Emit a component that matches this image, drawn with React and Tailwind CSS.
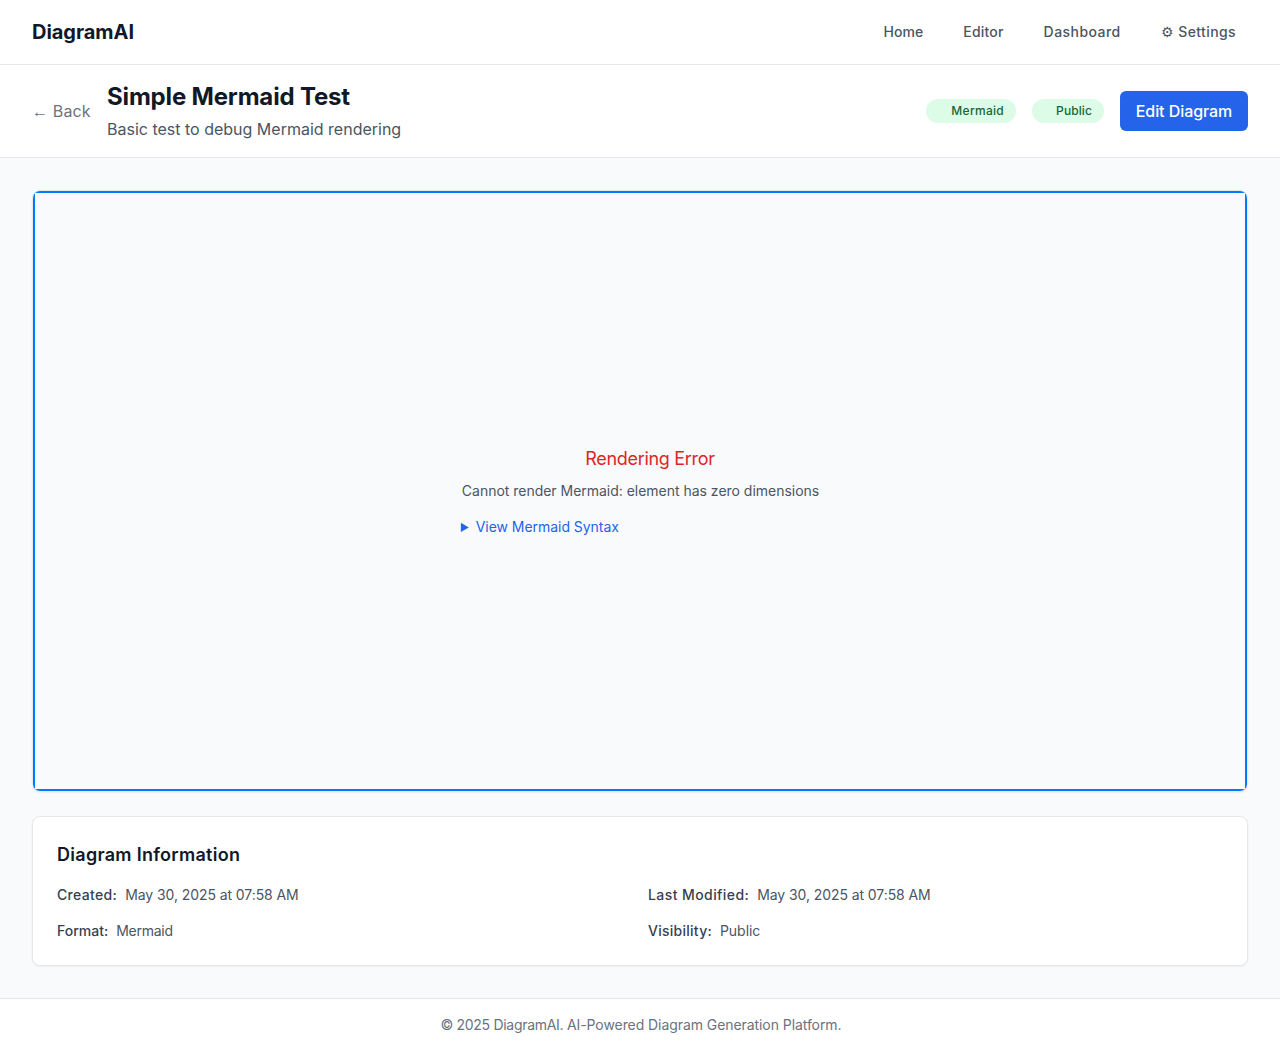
import React from "react";

const navLinks = [
  { label: "Home", tracking: "tracking-[0.05px]" },
  { label: "Editor", tracking: "tracking-[0.2px]" },
  { label: "Dashboard", tracking: "tracking-[0.45px]" },
  { label: "⚙ Settings", tracking: "tracking-[0.4px]" },
];

const details = [
  { label: "Created:", value: "May 30, 2025 at 07:58 AM", labelTracking: "tracking-[0.34px]", valueTracking: "tracking-[-0.08px]" },
  { label: "Last Modified:", value: "May 30, 2025 at 07:58 AM", labelTracking: "tracking-[0.42px]", valueTracking: "tracking-[-0.08px]" },
  { label: "Format:", value: "Mermaid", labelTracking: "tracking-normal", valueTracking: "tracking-[-0.26px]" },
  { label: "Visibility:", value: "Public", labelTracking: "tracking-[0.26px]", valueTracking: "tracking-[-0.04px]" },
];

function Badge({ width, tracking, children }) {
  return (
    <span
      className={`inline-flex items-center justify-end rounded-full bg-[#dcfce7] px-3 py-1 text-xs font-medium text-[#166534] ${width} ${tracking}`}
    >
      {children}
    </span>
  );
}

export default function App() {
  return (
    <div className="flex min-h-screen flex-col bg-[#f9fafb] font-[Inter,sans-serif] text-[#111827]">
      <header className="flex h-[65px] items-center justify-between border-b border-[#e5e7eb] bg-white px-8">
        <div className="text-xl font-bold tracking-[-0.04px]">DiagramAI</div>
        <nav className="flex gap-4">
          {navLinks.map(({ label, tracking }) => (
            <a key={label} className={`px-3 py-2 text-sm font-medium text-[#4b5563] ${tracking}`}>
              {label}
            </a>
          ))}
        </nav>
      </header>

      <section className="flex h-[93px] items-center justify-between border-b border-[#e5e7eb] bg-white px-8">
        <div className="flex items-center gap-4">
          <a className="w-[59px] whitespace-nowrap tracking-[0.15px] text-[#6b7280]">
            <span className="font-['Liberation_Sans']">←</span> Back
          </a>
          <div>
            <h1 className="text-2xl font-bold tracking-[-0.17px]">Simple Mermaid Test</h1>
            <p className="mt-1 text-[#4b5563]">Basic test to debug Mermaid rendering</p>
          </div>
        </div>
        <div className="flex items-center gap-4">
          <Badge width="w-[90px]" tracking="tracking-[0.28px]">Mermaid</Badge>
          <Badge width="w-[72px]" tracking="tracking-[0.1px]">Public</Badge>
          <button className="h-10 w-32 whitespace-nowrap rounded-md bg-[#2563eb] font-medium tracking-[-0.06px] text-white">
            Edit Diagram
          </button>
        </div>
      </section>

      <main className="flex flex-1 flex-col gap-6 p-8">
        <div className="h-[602px] overflow-hidden rounded-lg border border-[#e5e7eb] bg-white shadow-[0_1px_2px_0_rgba(0,0,0,0.05)]">
          <div className="flex h-full items-center justify-center border-2 border-[#007bff] bg-[#f9fafb]">
            <div className="text-center">
              <div className="mb-2 pl-5 text-lg tracking-[-0.31px] text-[#dc2626]">Rendering Error</div>
              <div className="pl-px text-sm tracking-[-0.02px] text-[#4b5563]">
                Cannot render Mermaid: element has zero dimensions
              </div>
              <details className="mt-4 text-left">
                <summary className="cursor-pointer text-sm tracking-[-0.04px] text-[#2563eb]">View Mermaid Syntax</summary>
              </details>
            </div>
          </div>
        </div>

        <div className="h-[150px] rounded-lg border border-[#e5e7eb] bg-white p-6 shadow-[0_1px_2px_0_rgba(0,0,0,0.05)]">
          <h2 className="mb-4 text-lg font-semibold tracking-[0.29px]">Diagram Information</h2>
          <div className="grid grid-cols-2 gap-4 text-sm">
            {details.map(({ label, value, labelTracking, valueTracking }) => (
              <div key={label} className="flex gap-2">
                <span className={`font-medium text-[#374151] ${labelTracking}`}>{label}</span>
                <span className={`text-[#4b5563] ${valueTracking}`}>{value}</span>
              </div>
            ))}
          </div>
        </div>
      </main>

      <footer className="border-t border-[#e5e7eb] bg-white py-4 pl-0.5 text-center text-sm tracking-[-0.137px] text-[#6b7280]">
        <span className="tracking-[-0.3px]">© 2025 DiagramAI. </span>
        <span className="tracking-[-0.07px]">AI-Powered Diagram Generation Platform.</span>
      </footer>
    </div>
  );
}
